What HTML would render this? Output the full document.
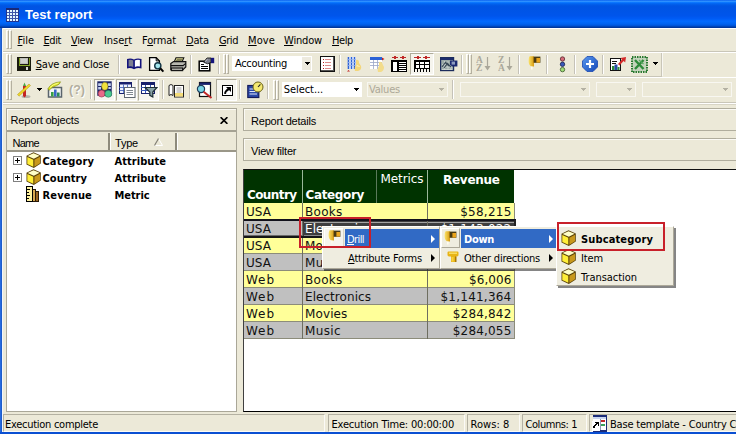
<!DOCTYPE html>
<html lang="en"><head><meta charset="utf-8"><title>Test report</title>
<style>
html,body{margin:0;padding:0;background:#ece9d8;}
#app{position:relative;width:736px;height:434px;overflow:hidden;background:#ece9d8;font-family:"Liberation Sans",Arial,sans-serif;}
#app div,#app svg,#app span{position:absolute;box-sizing:border-box;}
#app .t{white-space:nowrap;}
#app .t u{text-decoration:underline;text-underline-offset:1px;text-decoration-thickness:1px;}
#app .t span{position:static;}

</style></head>
<body>
<div id="app">
<div style="left:0px;top:0px;width:736px;height:28px;background:linear-gradient(to bottom,#0058ee 0%,#3593ff 4%,#288eff 6%,#127dff 8%,#036ffc 10%,#0262ee 14%,#0057e5 20%,#0054e3 24%,#0055eb 56%,#005bf5 66%,#026afe 76%,#0062ef 86%,#0052d6 92%,#0040ab 96%,#003092 100%)"></div>
<svg style="left:5.5px;top:7.5px;" width="13" height="14" viewBox="0 0 13 14" shape-rendering="crispEdges"><rect x="0" y="0" width="13" height="14" fill="#3c54a8"/><rect x="0" y="0" width="13" height="2" fill="#1a2a78"/><rect x="0" y="2" width="1" height="12" fill="#22348c"/><rect x="12" y="2" width="1" height="12" fill="#22348c"/><rect x="0" y="13" width="13" height="1" fill="#22348c"/><rect x="1" y="2" width="2" height="2" fill="#e4f6ff"/><rect x="4" y="2" width="2" height="2" fill="#e4f6ff"/><rect x="7" y="2" width="2" height="2" fill="#e4f6ff"/><rect x="10" y="2" width="2" height="2" fill="#e4f6ff"/><rect x="1" y="5" width="2" height="2" fill="#e4f6ff"/><rect x="4" y="5" width="2" height="2" fill="#e4f6ff"/><rect x="7" y="5" width="2" height="2" fill="#e4f6ff"/><rect x="10" y="5" width="2" height="2" fill="#e4f6ff"/><rect x="1" y="8" width="2" height="2" fill="#e4f6ff"/><rect x="4" y="8" width="2" height="2" fill="#e4f6ff"/><rect x="7" y="8" width="2" height="2" fill="#e4f6ff"/><rect x="10" y="8" width="2" height="2" fill="#e4f6ff"/><rect x="1" y="11" width="2" height="2" fill="#e4f6ff"/><rect x="4" y="11" width="2" height="2" fill="#e4f6ff"/><rect x="7" y="11" width="2" height="2" fill="#e4f6ff"/><rect x="10" y="11" width="2" height="2" fill="#e4f6ff"/></svg>
<div style="left:0px;top:28px;width:2px;height:406px;background:linear-gradient(to right,#2a6ee2 0,#2466dc 55%,#1450b4 100%)"></div>
<div style="left:2px;top:29px;width:1px;height:403px;background:#f2f5fa"></div>
<div style="left:0px;top:432px;width:736px;height:2px;background:#0a4fd2"></div>
<div style="left:2.5px;top:28px;width:734px;height:1px;background:#fff"></div>
<div style="left:6px;top:30px;width:3px;height:19px;background:#ece9d8;border-left:1px solid #fff;border-right:1px solid #b4b0a0;border-top:1px solid #fff;border-bottom:1px solid #b4b0a0"></div>
<div style="left:9px;top:30px;width:3px;height:19px;background:#ece9d8;border-left:1px solid #fff;border-right:1px solid #b4b0a0;border-top:1px solid #fff;border-bottom:1px solid #b4b0a0"></div>
<div style="left:3px;top:51px;width:733px;height:1px;background:#c9c6b8"></div>
<div style="left:3px;top:52px;width:733px;height:1px;background:#fff"></div>
<div style="left:6px;top:54px;width:3px;height:20px;background:#ece9d8;border-left:1px solid #fff;border-right:1px solid #b4b0a0;border-top:1px solid #fff;border-bottom:1px solid #b4b0a0"></div>
<div style="left:9px;top:54px;width:3px;height:20px;background:#ece9d8;border-left:1px solid #fff;border-right:1px solid #b4b0a0;border-top:1px solid #fff;border-bottom:1px solid #b4b0a0"></div>
<div style="left:3px;top:76px;width:733px;height:1px;background:#c9c6b8"></div>
<div style="left:3px;top:77px;width:733px;height:1px;background:#fff"></div>
<div style="left:6px;top:80px;width:3px;height:20px;background:#ece9d8;border-left:1px solid #fff;border-right:1px solid #b4b0a0;border-top:1px solid #fff;border-bottom:1px solid #b4b0a0"></div>
<div style="left:9px;top:80px;width:3px;height:20px;background:#ece9d8;border-left:1px solid #fff;border-right:1px solid #b4b0a0;border-top:1px solid #fff;border-bottom:1px solid #b4b0a0"></div>
<div style="left:3px;top:102px;width:733px;height:1px;background:#c9c6b8"></div>
<div style="left:3px;top:103px;width:733px;height:1px;background:#fff"></div>
<div style="left:3px;top:104px;width:733px;height:1px;background:#d8d5c6"></div>
<svg style="left:17px;top:57px;" width="14" height="14" viewBox="0 0 14 14" shape-rendering="crispEdges"><rect width="14" height="13.5" fill="#1a1a0e"/><rect x="3" y="1" width="8" height="6" fill="#bcbcb6"/><rect x="4" y="2" width="6" height="4" fill="#cfcfca"/><rect x="1.5" y="1" width="1" height="7.5" fill="#7c9c22"/><rect x="11.5" y="1" width="1" height="7.5" fill="#7c9c22"/><rect x="1.5" y="7.6" width="11" height="1" fill="#8aaa2a"/><rect x="9" y="9.6" width="2" height="3" fill="#d8d8d4"/></svg>
<div style="left:118px;top:55px;width:1px;height:19px;background:#c5c2b8"></div>
<div style="left:119px;top:55px;width:1px;height:19px;background:#fff"></div>
<svg style="left:126px;top:57px;" width="17" height="14" viewBox="0 0 17 14"><path d="M1 2 Q4.5 0.6 8 2.4 Q11.5 0.6 15.5 2 V11.4 Q11.5 10.4 8 12.2 Q4.5 10.4 1 11.4 Z" fill="#14147c"/><path d="M2.6 3 Q5 2.2 7.2 3.6 V10 Q5 8.9 2.6 9.6 Z" fill="#7c7e90"/><path d="M8.9 3.6 Q11 2.2 13.9 3 V9.6 Q11 8.9 8.9 10 Z" fill="#fff"/></svg>
<svg style="left:148px;top:57px;" width="17" height="16" viewBox="0 0 17 16"><path d="M1.6 0.7 H8.2 L11.4 3.9 V13.4 H1.6 Z" fill="#fff" stroke="#000" stroke-width="1.3"/><path d="M8.2 0.7 V3.9 H11.4" fill="none" stroke="#000" stroke-width="1"/><circle cx="9.8" cy="8.8" r="3.1" fill="#a4e6ee" stroke="#123444" stroke-width="1.4"/><path d="M12.2 11.2 L15.4 14.6" stroke="#000" stroke-width="2"/></svg>
<svg style="left:170px;top:57px;" width="17" height="15" viewBox="0 0 17 15"><path d="M4.2 5 L6 0.8 H13.8 L12 5 Z" fill="#f4f2a0" stroke="#111" stroke-width="1.1"/><path d="M6.6 2.3H12.4M6 3.7H11.8" stroke="#55553a" stroke-width=".9"/><path d="M0.8 6.6 L3.6 4.6 H15.8 V10 L13 12.6 H0.8 Z" fill="#b8b8b0" stroke="#111" stroke-width="1.2"/><path d="M0.8 8.6 H13 L15.8 6.4" fill="none" stroke="#111" stroke-width="1.1"/><path d="M0.8 10.4H13.2V14.2H0.8z" fill="#161616"/><path d="M2 12.2H12" stroke="#e0e0d8" stroke-width="1.1"/></svg>
<div style="left:190px;top:55px;width:1px;height:19px;background:#c5c2b8"></div>
<div style="left:191px;top:55px;width:1px;height:19px;background:#fff"></div>
<svg style="left:198px;top:57px;" width="17" height="15" viewBox="0 0 17 15"><rect x="1.2" y="4.2" width="10.6" height="9.6" fill="#fff" stroke="#000" stroke-width="1.5"/><path d="M3 7.5H6M3 9.5H10M3 11.5H10" stroke="#000" stroke-width="1"/><path d="M5.6 5.2 L9 1 L13 1 L13 5.4 L9.6 6.8 Z" fill="#7e808c" stroke="#1a1a1a" stroke-width=".9"/><path d="M7 4.6 L9.6 2.2" stroke="#d8d8e0" stroke-width=".8"/><rect x="13" y="0.8" width="3.2" height="5.4" fill="#14147c"/></svg>
<div style="left:218px;top:55px;width:1px;height:19px;background:#c5c2b8"></div>
<div style="left:219px;top:55px;width:1px;height:19px;background:#fff"></div>
<div style="left:223px;top:54px;width:3px;height:20px;background:#ece9d8;border-left:1px solid #fff;border-right:1px solid #b4b0a0;border-top:1px solid #fff;border-bottom:1px solid #b4b0a0"></div>
<div style="left:226px;top:54px;width:3px;height:20px;background:#ece9d8;border-left:1px solid #fff;border-right:1px solid #b4b0a0;border-top:1px solid #fff;border-bottom:1px solid #b4b0a0"></div>
<div style="left:232px;top:56px;width:80px;height:15px;background:#fff"></div>
<div style="left:302px;top:57px;width:9px;height:13px;background:#edeade"></div>
<svg style="left:305px;top:62px;" width="5" height="3" viewBox="0 0 5 3" shape-rendering="crispEdges"><path d="M0 0H5V1H0zM1 1H4V2H1zM2 2H3V3H2z" fill="#000"/></svg>
<svg style="left:320px;top:56px;" width="15" height="16" viewBox="0 0 15 16" shape-rendering="crispEdges"><rect x="0.5" y="0.5" width="14" height="15" fill="#fff" stroke="#111"/><rect x="13" y="1" width="1" height="14" fill="#555"/><rect x="1" y="14" width="13" height="1" fill="#555"/><rect x="3" y="3" width="1" height="1" fill="#b82020"/><rect x="5" y="3" width="6" height="1" fill="#dc8a8a"/><rect x="3" y="6" width="1" height="1" fill="#b82020"/><rect x="5" y="6" width="6" height="1" fill="#dc8a8a"/><rect x="3" y="9" width="1" height="1" fill="#b82020"/><rect x="5" y="9" width="6" height="1" fill="#dc8a8a"/><rect x="3" y="12" width="1" height="1" fill="#b82020"/><rect x="5" y="12" width="6" height="1" fill="#dc8a8a"/></svg>
<div style="left:339px;top:55px;width:1px;height:19px;background:#c5c2b8"></div>
<div style="left:340px;top:55px;width:1px;height:19px;background:#fff"></div>
<svg style="left:347px;top:57px;" width="15" height="15" viewBox="0 0 15 15"><rect x="1" y="0" width="8" height="12" fill="#fff"/><path d="M1.5 0V12M4.5 0V12M7.5 0V12" stroke="#2c62d6" stroke-width="1.6"/><path d="M0 2.5H9M0 5.5H9M0 8.5H9" stroke="#9ab4ea" stroke-width=".8"/><path d="M1.5 13 l-1.5 1.5 h3z" fill="#c02020"/><path d="M9 3 q3 -1 3 3 l2 3 q1 4 -3 5 h-3 q-1 -4 1 -6 z" fill="#f3d67a"/><path d="M9.5 9 q2 -1 3 1" stroke="#fff6c8" stroke-width="1" fill="none"/></svg>
<svg style="left:370px;top:57px;" width="15" height="15" viewBox="0 0 15 15"><rect x="0" y="0" width="12" height="3" fill="#2c62d6"/><rect x="0" y="3" width="12" height="9" fill="#fff"/><path d="M0 5.5H12M0 8.5H12M3.5 3V12M7.5 3V12" stroke="#9aa6c8" stroke-width=".8"/><path d="M12 0.5 l2.5 1.5 l-2.5 1.5z" fill="#c02020"/><path d="M9 5 q3 -1 3.5 2 l1.5 3 q0 4 -3 5 h-3 q-1 -4 1 -6 z" fill="#f3dc8a"/></svg>
<svg style="left:391px;top:56px;" width="16" height="16" viewBox="0 0 16 16" shape-rendering="crispEdges"><rect x="0.5" y="4.5" width="15" height="11" fill="#fff" stroke="#000" stroke-width="1"/><rect x="1" y="5" width="14" height="10" fill="none" stroke="#000" stroke-width="1"/><rect x="6" y="4" width="2" height="12" fill="#000"/><path d="M8 7.5H15M8 9.5H15M8 11.5H15M8 13.5H15" stroke="#000" stroke-width="1"/><path d="M1 1.5H7M9 1.5H15" stroke="#c02828" stroke-width="1"/><rect x="3" y="0" width="2" height="3" fill="#c02828"/><rect x="11" y="0" width="2" height="3" fill="#c02828"/></svg>
<div style="left:410px;top:53px;width:24px;height:22px;background:#f6f5ee;border:1px solid;border-color:#b0ad9c #fff #fff #b0ad9c"></div>
<svg style="left:414px;top:56px;" width="16" height="16" viewBox="0 0 16 16" shape-rendering="crispEdges"><path d="M0 1.5H7M9 1.5H16" stroke="#c02828" stroke-width="1"/><rect x="3" y="0" width="2" height="3" fill="#c02828"/><rect x="11" y="0" width="2" height="3" fill="#c02828"/><rect x="0.5" y="4.5" width="15" height="8" fill="#fff" stroke="#000" stroke-width="1"/><rect x="1" y="5" width="14" height="7" fill="none" stroke="#000" stroke-width="1"/><rect x="5" y="5" width="1" height="7" fill="#000"/><rect x="10" y="5" width="1" height="7" fill="#000"/><rect x="1" y="8" width="14" height="1" fill="#000"/><path d="M0.5 12V16M3.5 12V16M6.5 12V16M9.5 12V16M12.5 12V16M15.5 12V16" stroke="#000" stroke-width="1"/></svg>
<svg style="left:440px;top:57px;" width="18" height="15" viewBox="0 0 18 15"><rect x="0.6" y="0.6" width="13" height="13" fill="#9caaa8" stroke="#1c2c5c" stroke-width="1.2"/><rect x="1" y="1" width="12.4" height="2" fill="#1c2c6c"/><path d="M2 12.5H12M2 10H12M2 7.5H12M4.5 4V13M8 4V13M11 4V13" stroke="#d4dcd8" stroke-width=".7"/><path d="M2 10 L5.5 5.5 L9 9 M4 11 L7.5 6.5 L11 10" stroke="#3a4a58" stroke-width="1.2" fill="none"/><path d="M10 3.4 H17.4 V9.6 H12 L10 7.6Z" fill="#1c2a70"/><rect x="11.6" y="4.6" width="3.4" height="3" fill="#8e9cc0"/></svg>
<div style="left:461px;top:55px;width:1px;height:19px;background:#c5c2b8"></div>
<div style="left:462px;top:55px;width:1px;height:19px;background:#fff"></div>
<div style="left:466px;top:54px;width:3px;height:20px;background:#ece9d8;border-left:1px solid #fff;border-right:1px solid #b4b0a0;border-top:1px solid #fff;border-bottom:1px solid #b4b0a0"></div>
<div style="left:469px;top:54px;width:3px;height:20px;background:#ece9d8;border-left:1px solid #fff;border-right:1px solid #b4b0a0;border-top:1px solid #fff;border-bottom:1px solid #b4b0a0"></div>
<svg style="left:476px;top:56px;" width="16" height="16" viewBox="0 0 16 16"><text x="0" y="7.3" font-family="Liberation Serif, serif" font-weight="bold" font-size="9.5" fill="#aaa79a">A</text><text x="0" y="15" font-family="Liberation Serif, serif" font-weight="bold" font-size="9.5" fill="#aaa79a">Z</text><path d="M11.5 1V12" stroke="#aaa79a" stroke-width="1.2"/><path d="M8.5 10H14.5L11.5 14.5Z" fill="#aaa79a"/></svg>
<svg style="left:498px;top:56px;" width="16" height="16" viewBox="0 0 16 16"><text x="0" y="7.3" font-family="Liberation Serif, serif" font-weight="bold" font-size="9.5" fill="#aaa79a">Z</text><text x="0" y="15" font-family="Liberation Serif, serif" font-weight="bold" font-size="9.5" fill="#aaa79a">A</text><path d="M11.5 1V12" stroke="#aaa79a" stroke-width="1.2"/><path d="M8.5 10H14.5L11.5 14.5Z" fill="#aaa79a"/></svg>
<div style="left:518px;top:55px;width:1px;height:19px;background:#c5c2b8"></div>
<div style="left:519px;top:55px;width:1px;height:19px;background:#fff"></div>
<svg style="left:528px;top:56px;" width="14" height="14" viewBox="0 0 14 14"><defs><linearGradient id="dg" x1="0" y1="0" x2="1" y2="0"><stop offset="0" stop-color="#fbe36a"/><stop offset="1" stop-color="#d89a10"/></linearGradient></defs><path d="M1.6 0.3 h4.4 v10.2 h-2.6 q-2.8 -1.4 -2.8 -5.6 q0 -3.4 1 -4.6z" fill="url(#dg)"/><path d="M5.6 0.6 H12.4 V6.8 H5.6Z" fill="#4a3a10"/><path d="M8.4 2 H12 V6.6 H8.4Z" fill="#eaa41c"/><path d="M3 10.4 h1.6 v3 h-1.6z" fill="#fffcec"/></svg>
<div style="left:546px;top:55px;width:1px;height:19px;background:#c5c2b8"></div>
<div style="left:547px;top:55px;width:1px;height:19px;background:#fff"></div>
<svg style="left:558px;top:56px;" width="9" height="17" viewBox="0 0 9 17"><circle cx="4.5" cy="3" r="2.2" fill="#d46a78" stroke="#5a2a30" stroke-width=".8"/><circle cx="4.5" cy="8.3" r="2.2" fill="#3a58b8" stroke="#1a2450" stroke-width=".8"/><circle cx="4.5" cy="13.6" r="2.2" fill="#a0dc78" stroke="#3a5a2a" stroke-width=".8"/></svg>
<div style="left:574px;top:55px;width:1px;height:19px;background:#c5c2b8"></div>
<div style="left:575px;top:55px;width:1px;height:19px;background:#fff"></div>
<svg style="left:582px;top:56px;" width="16" height="16" viewBox="0 0 16 16"><defs><linearGradient id="bp" x1="0" y1="0" x2="1" y2="1"><stop offset="0" stop-color="#5a9af0"/><stop offset="1" stop-color="#1448b8"/></linearGradient></defs><path d="M5 0.5H11L15.5 5V11L11 15.5H5L0.5 11V5Z" fill="url(#bp)" stroke="#1a48b0" stroke-width=".8"/><path d="M8 4V12M4 8H12" stroke="#fff" stroke-width="2.2"/></svg>
<div style="left:602px;top:55px;width:1px;height:19px;background:#c5c2b8"></div>
<div style="left:603px;top:55px;width:1px;height:19px;background:#fff"></div>
<svg style="left:609px;top:56px;" width="18" height="16" viewBox="0 0 18 16"><rect x="1.5" y="2.5" width="10" height="12" fill="#fff" stroke="#111" stroke-width="1"/><path d="M3 5.5H8M3 7.5H7" stroke="#111" stroke-width="1"/><rect x="3" y="10" width="2.5" height="4" fill="#2a8a3a"/><rect x="5.5" y="8.5" width="3" height="5.5" fill="#2848a8"/><rect x="8.5" y="11" width="2" height="3" fill="#2a8a3a"/><path d="M9 8 L13 3.5 L11.5 2 L17 1 L16.2 6.5 L14.6 5 L10.5 9.5Z" fill="#d42a2a"/></svg>
<svg style="left:631px;top:56px;" width="17" height="17" viewBox="0 0 17 17"><rect x="1" y="1" width="15" height="15" fill="#c4d4bc" stroke="#2a7a32" stroke-width="2" stroke-dasharray="1.5 1"/><path d="M4 4 L12.5 13 M12.5 4 L4 13" stroke="#2e8a3a" stroke-width="2.4"/><path d="M8 4 L12.5 8" stroke="#58a860" stroke-width="1.2"/></svg>
<svg style="left:653px;top:62px;" width="5" height="3" viewBox="0 0 5 3" shape-rendering="crispEdges"><path d="M0 0H5V1H0zM1 1H4V2H1zM2 2H3V3H2z" fill="#000"/></svg>
<div style="left:661px;top:53px;width:1px;height:23px;background:#c9c6b8"></div>
<div style="left:662px;top:53px;width:1px;height:24px;background:#f8f7f2"></div>
<div style="left:662px;top:76px;width:74px;height:1px;background:#ece9d8"></div>
<div style="left:662px;top:77px;width:74px;height:1px;background:#fff"></div>
<svg style="left:17px;top:82px;" width="15" height="17" viewBox="0 0 15 17"><ellipse cx="9" cy="14.5" rx="4.5" ry="1.6" fill="#b4b4ac"/><path d="M6 4 L9 4 L9 14 L7.5 15.5 L6 14 Z" fill="#c42424"/><path d="M6 4 L7.5 0.5 L9 4Z" fill="#48a848"/><path d="M0.5 12.5 L12 2 L13.5 3.6 L2 14.2 Z" fill="#f0d828" stroke="#a89018" stroke-width=".5"/></svg>
<svg style="left:37px;top:88px;" width="5" height="3" viewBox="0 0 5 3" shape-rendering="crispEdges"><path d="M0 0H5V1H0zM1 1H4V2H1zM2 2H3V3H2z" fill="#000"/></svg>
<svg style="left:47px;top:81px;" width="16" height="17" viewBox="0 0 16 17"><path d="M1.5 8.5 L4 6.5 H14.5 V16 H1.5Z" fill="#f4f6f4" stroke="#5a646c" stroke-width="1.5"/><rect x="4" y="11" width="2.6" height="4.5" fill="#38a048"/><rect x="7" y="8.5" width="2.6" height="7" fill="#3a68c8"/><rect x="10" y="11.5" width="2.6" height="4" fill="#2a8a5a"/><path d="M0.8 8 Q4 1.5 13.5 0.8 Q13 3.5 9.5 4.6 Q5 5.6 2.2 9.2 Z" fill="#dfe622" stroke="#7a8418" stroke-width=".6"/><path d="M3 6.5 Q6 3 11.5 2" stroke="#f8fa90" stroke-width="1" fill="none"/></svg>
<svg style="left:67px;top:81px;" width="20" height="17" viewBox="0 0 20 17"><text x="11" y="14" text-anchor="middle" font-family="Liberation Sans, sans-serif" font-weight="bold" font-size="12.5" fill="#fff">(?)</text><text x="10" y="13" text-anchor="middle" font-family="Liberation Sans, sans-serif" font-weight="bold" font-size="12.5" fill="#b2af9f">(?)</text></svg>
<div style="left:90px;top:80px;width:1px;height:19px;background:#c5c2b8"></div>
<div style="left:91px;top:80px;width:1px;height:19px;background:#fff"></div>
<div style="left:94px;top:79px;width:21px;height:22px;background:#f6f5ee;border:1px solid;border-color:#b0ad9c #fff #fff #b0ad9c"></div>
<svg style="left:97px;top:81px;" width="16" height="18" viewBox="0 0 16 18"><rect x="0.3" y="0.3" width="14.4" height="14.5" fill="#1c2468"/><path d="M1.2 2.2H5V5H1.2zM1.2 6H4V8.6H1.2zM11 2.2H13.8V5H11zM11.4 6H13.8V8H11.4z" fill="#c4d0ee"/><ellipse cx="7.8" cy="5.2" rx="3.2" ry="4" fill="#f2e23c" stroke="#7a6e18" stroke-width=".5"/><circle cx="4.6" cy="12.6" r="3.5" fill="#e86a88" stroke="#7a2038" stroke-width=".5"/><circle cx="11.3" cy="12.8" r="3.5" fill="#4ac890" stroke="#1a6a48" stroke-width=".5"/></svg>
<div style="left:116px;top:79px;width:21px;height:22px;background:#f6f5ee;border:1px solid;border-color:#b0ad9c #fff #fff #b0ad9c"></div>
<svg style="left:119px;top:82px;" width="17" height="16" viewBox="0 0 17 16"><rect x="0.5" y="0.5" width="12" height="11" fill="#eef2fc" stroke="#18206c" stroke-width="1"/><rect x="0.5" y="0.5" width="12" height="2" fill="#18206c"/><path d="M0 5.5H13M0 8.5H13M4.5 2.5V11M8.5 2.5V11" stroke="#3858b8" stroke-width=".8"/><rect x="5.5" y="5.5" width="10.5" height="10" fill="#fff" stroke="#606870" stroke-width="1"/><path d="M7.5 8.5H14M7.5 10.5H14M7.5 12.5H14" stroke="#808890" stroke-width="1"/></svg>
<div style="left:138px;top:79px;width:21px;height:22px;background:#f6f5ee;border:1px solid;border-color:#b0ad9c #fff #fff #b0ad9c"></div>
<svg style="left:141px;top:82px;" width="17" height="16" viewBox="0 0 17 16"><rect x="0.5" y="0.5" width="13" height="11" fill="#fff" stroke="#18206c" stroke-width="1"/><rect x="0.5" y="0.5" width="13" height="2.5" fill="#18206c"/><path d="M0 5.5H14M0 8.5H14M4.5 3V11M9.5 3V11" stroke="#3858b8" stroke-width="1"/><path d="M4 5.5 H16 L11.8 10 V15 L8.8 13.4 V10 Z" fill="#8aa4a8" stroke="#1c2c34" stroke-width="1.2"/></svg>
<div style="left:162px;top:80px;width:1px;height:19px;background:#c5c2b8"></div>
<div style="left:163px;top:80px;width:1px;height:19px;background:#fff"></div>
<svg style="left:168px;top:83px;" width="17" height="15" viewBox="0 0 17 15"><path d="M1 2.5 q2 -2 4 0 v10 q-2 -2 -4 0z" fill="#fff" stroke="#222" stroke-width="1"/><rect x="6.5" y="2.5" width="9" height="11.5" fill="#fff" stroke="#222" stroke-width="1"/><rect x="7" y="10" width="8" height="3.5" fill="#f4dc78"/><path d="M8.5 5H13.5M8.5 7H13.5M8.5 9H13.5" stroke="#888" stroke-width=".8"/></svg>
<div style="left:189px;top:80px;width:1px;height:19px;background:#c5c2b8"></div>
<div style="left:190px;top:80px;width:1px;height:19px;background:#fff"></div>
<svg style="left:196px;top:81px;" width="17" height="18" viewBox="0 0 17 18"><rect x="3.5" y="1.5" width="11" height="14" fill="#fff" stroke="#111" stroke-width="1.2"/><rect x="3.5" y="1.5" width="11" height="2.4" fill="#18206c"/><circle cx="5" cy="8" r="3.6" fill="#7ad4e4" stroke="#1a3a5a" stroke-width="1.2"/><path d="M7.6 10.8 L15.5 17" stroke="#c02828" stroke-width="2"/></svg>
<div style="left:216px;top:79px;width:21px;height:22px;background:#f6f5ee;border:1px solid;border-color:#b0ad9c #fff #fff #b0ad9c"></div>
<svg style="left:221.5px;top:85px;" width="11" height="11" viewBox="0 0 11 11"><rect x="0.5" y="0.5" width="10" height="10" fill="#fff" stroke="#000" stroke-width="1"/><path d="M4 2H9V7Z" fill="#000"/><path d="M7.5 3.5 Q3.5 5.5 3 8.8" stroke="#000" stroke-width="2" fill="none"/></svg>
<div style="left:239px;top:80px;width:1px;height:19px;background:#c5c2b8"></div>
<div style="left:240px;top:80px;width:1px;height:19px;background:#fff"></div>
<svg style="left:247px;top:81px;" width="17" height="18" viewBox="0 0 17 18"><rect x="0.8" y="4.5" width="11" height="12" fill="#2a48a8" stroke="#141c5c" stroke-width="1.2"/><path d="M2.5 8H8M2.5 10.5H10M2.5 13H10" stroke="#dfe6f8" stroke-width="1.2"/><circle cx="11" cy="6" r="5" fill="#f4e870" stroke="#6a6218" stroke-width="1"/><path d="M11 6 L13.4 3.4" stroke="#222" stroke-width="1.1"/></svg>
<div style="left:267px;top:80px;width:1px;height:19px;background:#c5c2b8"></div>
<div style="left:268px;top:80px;width:1px;height:19px;background:#fff"></div>
<div style="left:273px;top:80px;width:3px;height:20px;background:#ece9d8;border-left:1px solid #fff;border-right:1px solid #b4b0a0;border-top:1px solid #fff;border-bottom:1px solid #b4b0a0"></div>
<div style="left:276px;top:80px;width:3px;height:20px;background:#ece9d8;border-left:1px solid #fff;border-right:1px solid #b4b0a0;border-top:1px solid #fff;border-bottom:1px solid #b4b0a0"></div>
<div style="left:282px;top:82px;width:80px;height:15px;background:#fff"></div>
<svg style="left:354px;top:88px;" width="5" height="3" viewBox="0 0 5 3" shape-rendering="crispEdges"><path d="M0 0H5V1H0zM1 1H4V2H1zM2 2H3V3H2z" fill="#000"/></svg>
<div style="left:367px;top:82px;width:81px;height:15px;background:#ece9d8;border:1px solid #f8f7f1"></div>
<svg style="left:439px;top:88px;" width="5" height="3" viewBox="0 0 5 3" shape-rendering="crispEdges"><path d="M0 0H5V1H0zM1 1H4V2H1zM2 2H3V3H2z" fill="#b4b1a3"/></svg>
<div style="left:452px;top:80px;width:1px;height:19px;background:#c5c2b8"></div>
<div style="left:453px;top:80px;width:1px;height:19px;background:#fff"></div>
<div style="left:460px;top:82px;width:130px;height:15px;background:#ece9d8;border:1px solid #f8f7f1"></div>
<svg style="left:581px;top:88px;" width="5" height="3" viewBox="0 0 5 3" shape-rendering="crispEdges"><path d="M0 0H5V1H0zM1 1H4V2H1zM2 2H3V3H2z" fill="#b4b1a3"/></svg>
<div style="left:596px;top:82px;width:40px;height:15px;background:#ece9d8;border:1px solid #f8f7f1"></div>
<svg style="left:627px;top:88px;" width="5" height="3" viewBox="0 0 5 3" shape-rendering="crispEdges"><path d="M0 0H5V1H0zM1 1H4V2H1zM2 2H3V3H2z" fill="#b4b1a3"/></svg>
<div style="left:642px;top:82px;width:90px;height:15px;background:#ece9d8;border:1px solid #f8f7f1"></div>
<svg style="left:723px;top:88px;" width="5" height="3" viewBox="0 0 5 3" shape-rendering="crispEdges"><path d="M0 0H5V1H0zM1 1H4V2H1zM2 2H3V3H2z" fill="#b4b1a3"/></svg>
<div style="left:6px;top:108px;width:231px;height:304px;background:#ece9d8;border:1px solid #aaa798;box-shadow:inset 1px 1px 0 #fbfaf5"></div>
<div style="left:7px;top:130px;width:229px;height:1.6px;background:#a5a293"></div>
<div style="left:7px;top:131.6px;width:229px;height:1px;background:#fff"></div>
<svg style="left:220px;top:117px;" width="8" height="7" viewBox="0 0 8 7" ><path d="M0.6 0.2 L7.4 6.8 M7.4 0.2 L0.6 6.8" stroke="#000" stroke-width="1.7" fill="none"/></svg>
<div style="left:7px;top:132px;width:229px;height:19px;background:#ece9d8"></div>
<div style="left:7px;top:150px;width:229px;height:1.6px;background:#9a9788"></div>
<div style="left:108px;top:133px;width:1.6px;height:17px;background:#8e8b7c"></div>
<div style="left:109.6px;top:133px;width:1px;height:17px;background:#fff"></div>
<div style="left:175px;top:133px;width:1.6px;height:17px;background:#8e8b7c"></div>
<div style="left:176.6px;top:133px;width:1px;height:17px;background:#fff"></div>
<svg style="left:154px;top:138px;" width="9" height="8" viewBox="0 0 9 8" ><path d="M4.5 0.5 L8.5 7.5 L0.5 7.5 Z" fill="#ece9d8" stroke="#fff" stroke-width="1"/><path d="M4.5 0.5 L0.5 7.5" stroke="#7e7b6e" stroke-width="1.2" fill="none"/></svg>
<div style="left:7px;top:152px;width:229px;height:259px;background:#fff"></div>
<svg style="left:13px;top:156px;" width="9" height="9" viewBox="0 0 9 9" shape-rendering="crispEdges"><rect x="0.5" y="0.5" width="8" height="8" fill="#fff" stroke="#808080"/><path d="M2 4.5H7M4.5 2V7" stroke="#000" stroke-width="1"/></svg>
<svg style="left:13px;top:173px;" width="9" height="9" viewBox="0 0 9 9" shape-rendering="crispEdges"><rect x="0.5" y="0.5" width="8" height="8" fill="#fff" stroke="#808080"/><path d="M2 4.5H7M4.5 2V7" stroke="#000" stroke-width="1"/></svg>
<svg style="left:26px;top:152px;" width="16" height="17" viewBox="0 0 16 17" ><path d="M0.5 3.8 L7.5 0.3 L14.8 3.4 L14.8 11.6 L7.8 16 L0.5 12.6 Z" fill="#5a4208"/><path d="M1.6 4 L7.5 1.2 L13.6 3.7 L7.8 6.8 Z" fill="#ffffc8"/><path d="M1.3 5 L7.3 7.8 L7.3 14.8 L1.3 12 Z" fill="#ffee38"/><path d="M8.4 7.8 L14 4.8 L14 11.2 L8.4 14.7 Z" fill="#c8981c"/></svg>
<svg style="left:26px;top:169px;" width="16" height="17" viewBox="0 0 16 17" ><path d="M0.5 3.8 L7.5 0.3 L14.8 3.4 L14.8 11.6 L7.8 16 L0.5 12.6 Z" fill="#5a4208"/><path d="M1.6 4 L7.5 1.2 L13.6 3.7 L7.8 6.8 Z" fill="#ffffc8"/><path d="M1.3 5 L7.3 7.8 L7.3 14.8 L1.3 12 Z" fill="#ffee38"/><path d="M8.4 7.8 L14 4.8 L14 11.2 L8.4 14.7 Z" fill="#c8981c"/></svg>
<svg style="left:26px;top:186px;" width="13" height="16" viewBox="0 0 13 16" shape-rendering="crispEdges"><rect x="0.5" y="0.5" width="6" height="15" fill="#fff2a0" stroke="#000"/><path d="M1 3.5H4M1 6.5H3M1 9.5H4M1 12.5H3" stroke="#000"/><rect x="7" y="3" width="3" height="13" fill="#2a1a08"/><rect x="7" y="4" width="2" height="11" fill="#d8a850"/><rect x="10" y="5" width="3" height="11" fill="#2a1a08"/><rect x="10" y="6" width="2" height="9" fill="#9a6420"/></svg>
<div style="left:243px;top:108px;width:500px;height:23px;background:#ece9d8;border:1px solid #b0ad9d;box-shadow:inset 1px 1px 0 #fbfaf5"></div>
<div style="left:243px;top:138px;width:500px;height:22.5px;background:#ece9d8;border:1px solid #b0ad9d;box-shadow:inset 1px 1px 0 #fbfaf5"></div>
<div style="left:243px;top:169px;width:500px;height:243px;background:#fff;border-left:1px solid #404040;border-top:1px solid #111;border-bottom:1px solid #000"></div>
<div style="left:244px;top:170px;width:270px;height:33px;background:#003300"></div>
<div style="left:302px;top:170px;width:1px;height:33px;background:#9ab89a"></div>
<div style="left:376px;top:170px;width:1px;height:33px;background:#5a7a5a"></div>
<div style="left:427px;top:170px;width:1px;height:33px;background:#9ab89a"></div>
<div style="left:244px;top:203px;width:270px;height:17px;background:#ffff99;border-bottom:1px solid #8c8c7a"></div>
<div style="left:302px;top:203px;width:1px;height:17px;background:#6e6e60"></div>
<div style="left:427px;top:203px;width:1px;height:17px;background:#6e6e60"></div>
<div style="left:244px;top:220px;width:270px;height:17px;background:#c0c0c0;border-bottom:1px solid #8c8c7a"></div>
<div style="left:302px;top:220px;width:1px;height:17px;background:#6e6e60"></div>
<div style="left:427px;top:220px;width:1px;height:17px;background:#6e6e60"></div>
<div style="left:244px;top:237px;width:270px;height:17px;background:#ffff99;border-bottom:1px solid #8c8c7a"></div>
<div style="left:302px;top:237px;width:1px;height:17px;background:#6e6e60"></div>
<div style="left:427px;top:237px;width:1px;height:17px;background:#6e6e60"></div>
<div style="left:244px;top:254px;width:270px;height:17px;background:#c0c0c0;border-bottom:1px solid #8c8c7a"></div>
<div style="left:302px;top:254px;width:1px;height:17px;background:#6e6e60"></div>
<div style="left:427px;top:254px;width:1px;height:17px;background:#6e6e60"></div>
<div style="left:244px;top:271px;width:270px;height:17px;background:#ffff99;border-bottom:1px solid #8c8c7a"></div>
<div style="left:302px;top:271px;width:1px;height:17px;background:#6e6e60"></div>
<div style="left:427px;top:271px;width:1px;height:17px;background:#6e6e60"></div>
<div style="left:244px;top:288px;width:270px;height:17px;background:#c0c0c0;border-bottom:1px solid #8c8c7a"></div>
<div style="left:302px;top:288px;width:1px;height:17px;background:#6e6e60"></div>
<div style="left:427px;top:288px;width:1px;height:17px;background:#6e6e60"></div>
<div style="left:244px;top:305px;width:270px;height:17px;background:#ffff99;border-bottom:1px solid #8c8c7a"></div>
<div style="left:302px;top:305px;width:1px;height:17px;background:#6e6e60"></div>
<div style="left:427px;top:305px;width:1px;height:17px;background:#6e6e60"></div>
<div style="left:244px;top:322px;width:270px;height:17px;background:#c0c0c0;border-bottom:1px solid #8c8c7a"></div>
<div style="left:302px;top:322px;width:1px;height:17px;background:#6e6e60"></div>
<div style="left:427px;top:322px;width:1px;height:17px;background:#6e6e60"></div>
<div style="left:514px;top:203px;width:1px;height:136px;background:#8c8c7a"></div>
<div style="left:303px;top:220px;width:212px;height:17px;background:#3e3e3e"></div>
<div style="left:304px;top:221.6px;width:211px;height:1.2px;background:#a4a4a4"></div>
<div style="left:304px;top:234.6px;width:211px;height:1.2px;background:#8a8a8a"></div>
<div style="left:244px;top:219px;width:272px;height:2px;background:#12121c"></div>
<div style="left:244px;top:235.6px;width:272px;height:2.4px;background:#161616"></div>
<div style="left:244px;top:234.8px;width:59px;height:1px;background:#6a6a6a"></div>
<div style="left:514px;top:220px;width:2px;height:17px;background:#222"></div>
<div style="left:302px;top:221px;width:1px;height:15px;background:#6e6e60"></div>
<div style="left:427px;top:221px;width:1px;height:15px;background:#6e6e60"></div>
<div style="left:324px;top:228px;width:118px;height:43px;background:rgba(0,0,0,.48);z-index:5"></div>
<div style="left:322px;top:226px;width:118px;height:43px;background:#efede0;border:1px solid;border-color:#fff #aca899 #aca899 #fff;z-index:5"></div>
<div style="left:345px;top:229px;width:94px;height:18.5px;background:#316ac5;z-index:5"></div>
<svg style="left:431px;top:235px;z-index:6" width="4" height="8" viewBox="0 0 4 8" ><path d="M0 0L4 4L0 8Z" fill="#fff"/></svg>
<svg style="left:431px;top:254px;z-index:6" width="4" height="8" viewBox="0 0 4 8" ><path d="M0 0L4 4L0 8Z" fill="#000"/></svg>
<div style="left:324px;top:228px;width:20px;height:19px;background:#f6f5ee;border:1px solid;border-color:#fff #d8d5c6 #d8d5c6 #fff;z-index:5"></div>
<svg style="left:328px;top:230px;z-index:6" width="14" height="14" viewBox="0 0 14 14"><defs><linearGradient id="dg" x1="0" y1="0" x2="1" y2="0"><stop offset="0" stop-color="#fbe36a"/><stop offset="1" stop-color="#d89a10"/></linearGradient></defs><path d="M1.6 0.3 h4.4 v10.2 h-2.6 q-2.8 -1.4 -2.8 -5.6 q0 -3.4 1 -4.6z" fill="url(#dg)"/><path d="M5.6 0.6 H12.4 V6.8 H5.6Z" fill="#4a3a10"/><path d="M8.4 2 H12 V6.6 H8.4Z" fill="#eaa41c"/><path d="M3 10.4 h1.6 v3 h-1.6z" fill="#fffcec"/></svg>
<div style="left:442px;top:228px;width:117px;height:43px;background:rgba(0,0,0,.48);z-index:5"></div>
<div style="left:440px;top:226px;width:117px;height:43px;background:#efede0;border:1px solid;border-color:#fff #aca899 #aca899 #fff;z-index:5"></div>
<div style="left:461px;top:229px;width:95px;height:18.5px;background:#316ac5;z-index:5"></div>
<div style="left:441px;top:228px;width:19px;height:19.5px;background:#efede0;border:1px solid;border-color:#fff #aca899 #aca899 #fff;z-index:5"></div>
<svg style="left:549px;top:235px;z-index:6" width="4" height="8" viewBox="0 0 4 8" ><path d="M0 0L4 4L0 8Z" fill="#fff"/></svg>
<svg style="left:549px;top:254px;z-index:6" width="4" height="8" viewBox="0 0 4 8" ><path d="M0 0L4 4L0 8Z" fill="#000"/></svg>
<svg style="left:444px;top:231px;z-index:6" width="14" height="14" viewBox="0 0 14 14"><defs><linearGradient id="dg" x1="0" y1="0" x2="1" y2="0"><stop offset="0" stop-color="#fbe36a"/><stop offset="1" stop-color="#d89a10"/></linearGradient></defs><path d="M1.6 0.3 h4.4 v10.2 h-2.6 q-2.8 -1.4 -2.8 -5.6 q0 -3.4 1 -4.6z" fill="url(#dg)"/><path d="M5.6 0.6 H12.4 V6.8 H5.6Z" fill="#4a3a10"/><path d="M8.4 2 H12 V6.6 H8.4Z" fill="#eaa41c"/><path d="M3 10.4 h1.6 v3 h-1.6z" fill="#fffcec"/></svg>
<svg style="left:447px;top:251px;z-index:6" width="12" height="12" viewBox="0 0 12 12"><path d="M0.5 1.5 q0 -1 1 -1 h9 q1 0 1 1 v2.5 q0 1 -1.5 1.5 h-1 v5.5 h-5 v-5.5 h-2 q-1.5 -.5 -1.5 -1.5z" fill="#e8b416"/><path d="M2 1.5 h8 v1.5 h-8z" fill="#f8dc60"/><path d="M4.5 6 h2 v4.5 h-2z" fill="#f6d040"/><path d="M8 5.5 h1.5 v5.5 h-1.5z" fill="#a87808"/></svg>
<div style="left:558px;top:228px;width:118px;height:60px;background:rgba(0,0,0,.48);z-index:5"></div>
<div style="left:556px;top:226px;width:118px;height:60px;background:#efede0;border:1px solid;border-color:#fff #aca899 #aca899 #fff;z-index:5"></div>
<svg style="left:561px;top:229.5px;z-index:6" width="16" height="17" viewBox="0 0 16 17" ><path d="M0.5 3.8 L7.5 0.3 L14.8 3.4 L14.8 11.6 L7.8 16 L0.5 12.6 Z" fill="#5a4208"/><path d="M1.6 4 L7.5 1.2 L13.6 3.7 L7.8 6.8 Z" fill="#ffffc8"/><path d="M1.3 5 L7.3 7.8 L7.3 14.8 L1.3 12 Z" fill="#ffee38"/><path d="M8.4 7.8 L14 4.8 L14 11.2 L8.4 14.7 Z" fill="#c8981c"/></svg>
<svg style="left:561px;top:249px;z-index:6" width="16" height="17" viewBox="0 0 16 17" ><path d="M0.5 3.8 L7.5 0.3 L14.8 3.4 L14.8 11.6 L7.8 16 L0.5 12.6 Z" fill="#5a4208"/><path d="M1.6 4 L7.5 1.2 L13.6 3.7 L7.8 6.8 Z" fill="#ffffc8"/><path d="M1.3 5 L7.3 7.8 L7.3 14.8 L1.3 12 Z" fill="#ffee38"/><path d="M8.4 7.8 L14 4.8 L14 11.2 L8.4 14.7 Z" fill="#c8981c"/></svg>
<svg style="left:561px;top:267.7px;z-index:6" width="16" height="17" viewBox="0 0 16 17" ><path d="M0.5 3.8 L7.5 0.3 L14.8 3.4 L14.8 11.6 L7.8 16 L0.5 12.6 Z" fill="#5a4208"/><path d="M1.6 4 L7.5 1.2 L13.6 3.7 L7.8 6.8 Z" fill="#ffffc8"/><path d="M1.3 5 L7.3 7.8 L7.3 14.8 L1.3 12 Z" fill="#ffee38"/><path d="M8.4 7.8 L14 4.8 L14 11.2 L8.4 14.7 Z" fill="#c8981c"/></svg>
<div style="left:299px;top:217px;width:72px;height:31px;border:2px solid #c8202a;z-index:7"></div>
<div style="left:557px;top:222px;width:108px;height:29px;border:2px solid #c8202a;z-index:7"></div>
<div style="left:3px;top:414px;width:322px;height:17.5px;border:1px solid;border-color:#b4b1a2 #fbfaf6 #fbfaf6 #b4b1a2"></div>
<div style="left:328px;top:414px;width:137px;height:17.5px;border:1px solid;border-color:#b4b1a2 #fbfaf6 #fbfaf6 #b4b1a2"></div>
<div style="left:467px;top:414px;width:53px;height:17.5px;border:1px solid;border-color:#b4b1a2 #fbfaf6 #fbfaf6 #b4b1a2"></div>
<div style="left:522px;top:414px;width:65px;height:17.5px;border:1px solid;border-color:#b4b1a2 #fbfaf6 #fbfaf6 #b4b1a2"></div>
<div style="left:589px;top:414px;width:156px;height:17.5px;border:1px solid;border-color:#b4b1a2 #fbfaf6 #fbfaf6 #b4b1a2"></div>
<svg style="left:592px;top:415px;" width="15" height="17" viewBox="0 0 15 17" shape-rendering="crispEdges"><rect x="1" y="0" width="14" height="16" fill="#fff"/><rect x="1" y="0" width="14" height="2" fill="#1c2c78"/><rect x="1" y="2" width="14" height="2" fill="#c8d4f0"/><rect x="14" y="0" width="1" height="16" fill="#1c2c78"/><rect x="1" y="15" width="14" height="1.5" fill="#1c2c78"/><rect x="8" y="4" width="1" height="11" fill="#9098b0"/><rect x="9" y="5" width="4" height="2" fill="#c02828"/><rect x="9" y="9" width="4" height="2" fill="#38a058"/><rect x="0" y="6" width="8" height="10" fill="#fff"/><path d="M3 7H7V11H6V9H5V10H4V11H3V12H2V10H3V9H4V8H3Z" fill="#000"/><rect x="1" y="11" width="2" height="2" fill="#000"/></svg>
<span id="t0" class="t" style='left:25px;top:7.0px;font:bold 13px/16px "Liberation Sans", Arial, sans-serif;color:#fff;letter-spacing:0.042px;'>Test report</span>
<span id="t1" class="t" style='left:17.5px;top:33.0px;font:normal 11px/16px "DejaVu Sans Condensed", "DejaVu Sans", "Liberation Sans", sans-serif;color:#000;'><u>F</u>ile</span>
<span id="t2" class="t" style='left:43.5px;top:33.0px;font:normal 11px/16px "DejaVu Sans Condensed", "DejaVu Sans", "Liberation Sans", sans-serif;color:#000;letter-spacing:-0.422px;'><u>E</u>dit</span>
<span id="t3" class="t" style='left:71px;top:33.0px;font:normal 11px/16px "DejaVu Sans Condensed", "DejaVu Sans", "Liberation Sans", sans-serif;color:#000;letter-spacing:-0.367px;'><u>V</u>iew</span>
<span id="t4" class="t" style='left:104px;top:33.0px;font:normal 11px/16px "DejaVu Sans Condensed", "DejaVu Sans", "Liberation Sans", sans-serif;color:#000;letter-spacing:-0.068px;'>Inse<u>r</u>t</span>
<span id="t5" class="t" style='left:142px;top:33.0px;font:normal 11px/16px "DejaVu Sans Condensed", "DejaVu Sans", "Liberation Sans", sans-serif;color:#000;letter-spacing:-0.141px;'>F<u>o</u>rmat</span>
<span id="t6" class="t" style='left:186px;top:33.0px;font:normal 11px/16px "DejaVu Sans Condensed", "DejaVu Sans", "Liberation Sans", sans-serif;color:#000;letter-spacing:-0.160px;'><u>D</u>ata</span>
<span id="t7" class="t" style='left:219px;top:33.0px;font:normal 11px/16px "DejaVu Sans Condensed", "DejaVu Sans", "Liberation Sans", sans-serif;color:#000;letter-spacing:-0.445px;'><u>G</u>rid</span>
<span id="t8" class="t" style='left:248px;top:33.0px;font:normal 11px/16px "DejaVu Sans Condensed", "DejaVu Sans", "Liberation Sans", sans-serif;color:#000;letter-spacing:0.113px;'><u>M</u>ove</span>
<span id="t9" class="t" style='left:284px;top:33.0px;font:normal 11px/16px "DejaVu Sans Condensed", "DejaVu Sans", "Liberation Sans", sans-serif;color:#000;letter-spacing:-0.169px;'><u>W</u>indow</span>
<span id="t10" class="t" style='left:332px;top:33.0px;font:normal 11px/16px "DejaVu Sans Condensed", "DejaVu Sans", "Liberation Sans", sans-serif;color:#000;letter-spacing:-0.395px;'><u>H</u>elp</span>
<span id="t11" class="t" style='left:35.7px;top:57.0px;font:normal 11px/16px "DejaVu Sans Condensed", "DejaVu Sans", "Liberation Sans", sans-serif;color:#000;letter-spacing:-0.192px;'><u>S</u>ave and Close</span>
<span id="t12" class="t" style='left:235px;top:55.5px;font:normal 11px/16px "DejaVu Sans Condensed", "DejaVu Sans", "Liberation Sans", sans-serif;color:#000;letter-spacing:-0.325px;'>Accounting</span>
<span id="t13" class="t" style='left:283.7px;top:82.0px;font:normal 11px/16px "DejaVu Sans Condensed", "DejaVu Sans", "Liberation Sans", sans-serif;color:#000;letter-spacing:-0.052px;'>Select...</span>
<span id="t14" class="t" style='left:369px;top:82.0px;font:normal 11px/16px "DejaVu Sans Condensed", "DejaVu Sans", "Liberation Sans", sans-serif;color:#aca899;letter-spacing:-0.208px;'>Values</span>
<span id="t15" class="t" style='left:10.6px;top:111.7px;font:normal 11px/16px "Liberation Sans", Arial, sans-serif;color:#000;letter-spacing:-0.181px;'>Report objects</span>
<span id="t16" class="t" style='left:12.4px;top:135.0px;font:normal 11px/16px "Liberation Sans", Arial, sans-serif;color:#000;letter-spacing:-0.686px;'>Name</span>
<span id="t17" class="t" style='left:115px;top:135.0px;font:normal 11px/16px "Liberation Sans", Arial, sans-serif;color:#000;letter-spacing:-0.215px;'>Type</span>
<span id="t18" class="t" style='left:42.5px;top:154.0px;font:bold 11px/16px "DejaVu Sans Condensed", "DejaVu Sans", "Liberation Sans", sans-serif;color:#000;letter-spacing:0.111px;'>Category</span>
<span id="t19" class="t" style='left:42.5px;top:171.0px;font:bold 11px/16px "DejaVu Sans Condensed", "DejaVu Sans", "Liberation Sans", sans-serif;color:#000;letter-spacing:0.038px;'>Country</span>
<span id="t20" class="t" style='left:42.5px;top:188.0px;font:bold 11px/16px "DejaVu Sans Condensed", "DejaVu Sans", "Liberation Sans", sans-serif;color:#000;letter-spacing:0.170px;'>Revenue</span>
<span id="t21" class="t" style='left:114.5px;top:154.0px;font:bold 11px/16px "DejaVu Sans Condensed", "DejaVu Sans", "Liberation Sans", sans-serif;color:#000;letter-spacing:0.057px;'>Attribute</span>
<span id="t22" class="t" style='left:114.5px;top:171.0px;font:bold 11px/16px "DejaVu Sans Condensed", "DejaVu Sans", "Liberation Sans", sans-serif;color:#000;letter-spacing:0.057px;'>Attribute</span>
<span id="t23" class="t" style='left:114.5px;top:188.0px;font:bold 11px/16px "DejaVu Sans Condensed", "DejaVu Sans", "Liberation Sans", sans-serif;color:#000;letter-spacing:-0.073px;'>Metric</span>
<span id="t24" class="t" style='left:251px;top:113.3px;font:normal 11px/16px "Liberation Sans", Arial, sans-serif;color:#000;letter-spacing:-0.205px;'>Report details</span>
<span id="t25" class="t" style='left:251px;top:142.7px;font:normal 11px/16px "Liberation Sans", Arial, sans-serif;color:#000;letter-spacing:-0.199px;'>View filter</span>
<span id="t26" class="t" style='left:247px;top:186.5px;font:bold 12px/16px "DejaVu Sans", "Liberation Sans", sans-serif;color:#fff;letter-spacing:-0.589px;'>Country</span>
<span id="t27" class="t" style='left:305.5px;top:186.5px;font:bold 12px/16px "DejaVu Sans", "Liberation Sans", sans-serif;color:#fff;letter-spacing:-0.357px;'>Category</span>
<span id="t28" class="t" style='left:380.5px;top:170.6px;font:normal 12px/16px "DejaVu Sans", "Liberation Sans", sans-serif;color:#fff;letter-spacing:-0.080px;'>Metrics</span>
<span id="t29" class="t" style='left:443px;top:171.7px;font:bold 12px/16px "DejaVu Sans", "Liberation Sans", sans-serif;color:#fff;letter-spacing:-0.268px;'>Revenue</span>
<span id="t30" class="t" style='left:246px;top:203.5px;font:normal 12px/16px "DejaVu Sans", "Liberation Sans", sans-serif;color:#111;letter-spacing:0.052px;'>USA</span>
<span id="t31" class="t" style='left:305px;top:203.5px;font:normal 12px/16px "DejaVu Sans", "Liberation Sans", sans-serif;color:#111;letter-spacing:0.295px;'>Books</span>
<span id="t32" class="t" style='right:224.5px;top:203.5px;font:normal 12px/16px "DejaVu Sans", "Liberation Sans", sans-serif;color:#111;letter-spacing:0.239px;'>$58,215</span>
<span id="t33" class="t" style='left:246px;top:220.5px;font:normal 12px/16px "DejaVu Sans", "Liberation Sans", sans-serif;color:#111;letter-spacing:0.052px;'>USA</span>
<span id="t34" class="t" style='left:305px;top:220.5px;font:normal 12px/16px "DejaVu Sans", "Liberation Sans", sans-serif;color:#fff;letter-spacing:0.054px;'>Electronics</span>
<span id="t35" class="t" style='right:224.5px;top:220.5px;font:normal 12px/16px "DejaVu Sans", "Liberation Sans", sans-serif;color:#fff;letter-spacing:0.228px;'>$1,143,022</span>
<span id="t36" class="t" style='left:246px;top:237.5px;font:normal 12px/16px "DejaVu Sans", "Liberation Sans", sans-serif;color:#111;letter-spacing:0.052px;'>USA</span>
<span id="t37" class="t" style='left:305px;top:237.5px;font:normal 12px/16px "DejaVu Sans", "Liberation Sans", sans-serif;color:#111;letter-spacing:0.122px;'>Movies</span>
<span id="t38" class="t" style='right:224.5px;top:237.5px;font:normal 12px/16px "DejaVu Sans", "Liberation Sans", sans-serif;color:#111;letter-spacing:0.179px;'>$318,504</span>
<span id="t39" class="t" style='left:246px;top:254.5px;font:normal 12px/16px "DejaVu Sans", "Liberation Sans", sans-serif;color:#111;letter-spacing:0.052px;'>USA</span>
<span id="t40" class="t" style='left:305px;top:254.5px;font:normal 12px/16px "DejaVu Sans", "Liberation Sans", sans-serif;color:#111;letter-spacing:0.369px;'>Music</span>
<span id="t41" class="t" style='right:224.5px;top:254.5px;font:normal 12px/16px "DejaVu Sans", "Liberation Sans", sans-serif;color:#111;letter-spacing:0.179px;'>$320,181</span>
<span id="t42" class="t" style='left:246px;top:271.5px;font:normal 12px/16px "DejaVu Sans", "Liberation Sans", sans-serif;color:#111;letter-spacing:0.943px;'>Web</span>
<span id="t43" class="t" style='left:305px;top:271.5px;font:normal 12px/16px "DejaVu Sans", "Liberation Sans", sans-serif;color:#111;letter-spacing:0.295px;'>Books</span>
<span id="t44" class="t" style='right:224.5px;top:271.5px;font:normal 12px/16px "DejaVu Sans", "Liberation Sans", sans-serif;color:#111;letter-spacing:0.083px;'>$6,006</span>
<span id="t45" class="t" style='left:246px;top:288.5px;font:normal 12px/16px "DejaVu Sans", "Liberation Sans", sans-serif;color:#111;letter-spacing:0.943px;'>Web</span>
<span id="t46" class="t" style='left:305px;top:288.5px;font:normal 12px/16px "DejaVu Sans", "Liberation Sans", sans-serif;color:#111;letter-spacing:0.054px;'>Electronics</span>
<span id="t47" class="t" style='right:224.5px;top:288.5px;font:normal 12px/16px "DejaVu Sans", "Liberation Sans", sans-serif;color:#111;letter-spacing:0.228px;'>$1,141,364</span>
<span id="t48" class="t" style='left:246px;top:305.5px;font:normal 12px/16px "DejaVu Sans", "Liberation Sans", sans-serif;color:#111;letter-spacing:0.943px;'>Web</span>
<span id="t49" class="t" style='left:305px;top:305.5px;font:normal 12px/16px "DejaVu Sans", "Liberation Sans", sans-serif;color:#111;letter-spacing:0.122px;'>Movies</span>
<span id="t50" class="t" style='right:224.5px;top:305.5px;font:normal 12px/16px "DejaVu Sans", "Liberation Sans", sans-serif;color:#111;letter-spacing:0.179px;'>$284,842</span>
<span id="t51" class="t" style='left:246px;top:322.5px;font:normal 12px/16px "DejaVu Sans", "Liberation Sans", sans-serif;color:#111;letter-spacing:0.943px;'>Web</span>
<span id="t52" class="t" style='left:305px;top:322.5px;font:normal 12px/16px "DejaVu Sans", "Liberation Sans", sans-serif;color:#111;letter-spacing:0.369px;'>Music</span>
<span id="t53" class="t" style='right:224.5px;top:322.5px;font:normal 12px/16px "DejaVu Sans", "Liberation Sans", sans-serif;color:#111;letter-spacing:0.179px;'>$284,055</span>
<span id="t54" class="t" style='left:5px;top:417.0px;font:normal 11px/16px "DejaVu Sans Condensed", "DejaVu Sans", "Liberation Sans", sans-serif;color:#000;letter-spacing:-0.273px;'>Execution complete</span>
<span id="t55" class="t" style='left:331.5px;top:417.0px;font:normal 11px/16px "DejaVu Sans Condensed", "DejaVu Sans", "Liberation Sans", sans-serif;color:#000;letter-spacing:-0.178px;'>Execution Time: 00:00:00</span>
<span id="t56" class="t" style='left:470.5px;top:417.0px;font:normal 11px/16px "DejaVu Sans Condensed", "DejaVu Sans", "Liberation Sans", sans-serif;color:#000;letter-spacing:0.076px;'>Rows: 8</span>
<span id="t57" class="t" style='left:525.5px;top:417.0px;font:normal 11px/16px "DejaVu Sans Condensed", "DejaVu Sans", "Liberation Sans", sans-serif;color:#000;letter-spacing:-0.434px;'>Columns: 1</span>
<span id="t58" class="t" style='left:610px;top:417.0px;font:normal 11px/16px "DejaVu Sans Condensed", "DejaVu Sans", "Liberation Sans", sans-serif;color:#000;letter-spacing:-0.194px;'>Base template - Country C</span>
<span id="t59" class="t" style='left:347px;top:232.0px;font:normal 11px/16px "DejaVu Sans Condensed", "DejaVu Sans", "Liberation Sans", sans-serif;color:#fff;letter-spacing:-0.591px;z-index:6;'><u>D</u>rill</span>
<span id="t60" class="t" style='left:348px;top:251.0px;font:normal 11px/16px "DejaVu Sans Condensed", "DejaVu Sans", "Liberation Sans", sans-serif;color:#000;letter-spacing:-0.190px;z-index:6;'><u>A</u>ttribute Forms</span>
<span id="t61" class="t" style='left:464px;top:232.0px;font:bold 11px/16px "DejaVu Sans Condensed", "DejaVu Sans", "Liberation Sans", sans-serif;color:#fff;letter-spacing:-0.305px;z-index:6;'>Down</span>
<span id="t62" class="t" style='left:464px;top:251.0px;font:normal 11px/16px "DejaVu Sans Condensed", "DejaVu Sans", "Liberation Sans", sans-serif;color:#000;letter-spacing:-0.234px;z-index:6;'>Other directions</span>
<span id="t63" class="t" style='left:581px;top:232.0px;font:bold 11px/16px "DejaVu Sans Condensed", "DejaVu Sans", "Liberation Sans", sans-serif;color:#000;letter-spacing:0.139px;z-index:6;'>Subcategory</span>
<span id="t64" class="t" style='left:581px;top:251.0px;font:normal 11px/16px "DejaVu Sans Condensed", "DejaVu Sans", "Liberation Sans", sans-serif;color:#000;letter-spacing:-0.133px;z-index:6;'>Item</span>
<span id="t65" class="t" style='left:581px;top:270.0px;font:normal 11px/16px "DejaVu Sans Condensed", "DejaVu Sans", "Liberation Sans", sans-serif;color:#000;letter-spacing:-0.041px;z-index:6;'>Transaction</span>
</div>
</body></html>
